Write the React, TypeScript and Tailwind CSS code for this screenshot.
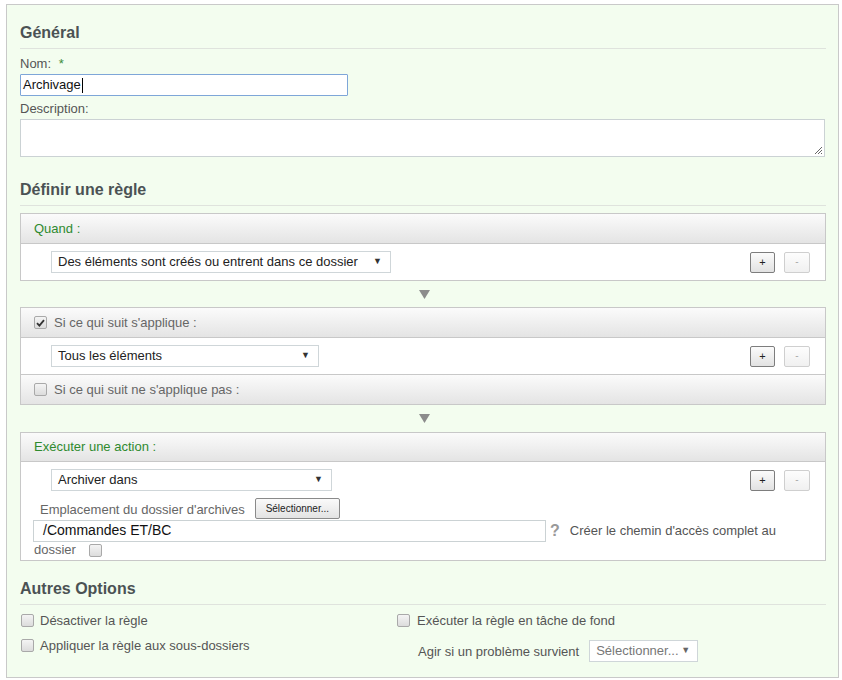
import React from 'react';

const font = { fontFamily: '"Liberation Sans", Arial, sans-serif' };

function Box({ checked = false }: { checked?: boolean }) {
  return (
    <span className="inline-flex h-[13px] w-[13px] shrink-0 items-center justify-center rounded-[2px] border border-[#a9a9a9] bg-gradient-to-b from-[#f4f4f4] to-[#dcdcdc]">
      {checked && (
        <svg width="9" height="8" viewBox="0 0 9 8">
          <path d="M1 4.2 L3.4 6.6 L8 1.2" fill="none" stroke="#333" strokeWidth="1.8" />
        </svg>
      )}
    </span>
  );
}

function Select({ label, w }: { label: string; w: string }) {
  return (
    <div className={`flex h-[22px] items-center justify-between border border-[#cfd6d9] bg-white pl-[6px] pr-[8px] text-[13px] text-[#222] ${w}`}>
      <span>{label}</span>
      <span className="text-[9px] text-[#333]">▼</span>
    </div>
  );
}

function PlusMinus() {
  return (
    <div className="flex gap-[9px]">
      <button className="flex h-[21px] w-[25px] items-center justify-center rounded-[2px] border border-[#7d7d7d] bg-gradient-to-b from-[#fbfbfb] to-[#e2e2e2] text-[11px] leading-none text-[#222]">+</button>
      <button className="flex h-[21px] w-[26px] items-center justify-center rounded-[2px] border border-[#cfcfcf] bg-gradient-to-b from-[#fdfdfd] to-[#f0f0f0] text-[10px] leading-none text-[#aaa]">-</button>
    </div>
  );
}

function Header({ children }: { children: React.ReactNode }) {
  return (
    <div className="flex h-[29px] items-center gap-[7px] bg-gradient-to-b from-[#fbfbfb] to-[#e4e4e4] pl-[13px] text-[13px] text-[#666]">
      {children}
    </div>
  );
}

function Arrow({ h }: { h: string }) {
  return (
    <div className={`flex ${h} items-center justify-center pl-[2px]`}>
      <svg width="11" height="9" viewBox="0 0 11 9">
        <path d="M0 0 H11 L5.5 9 Z" fill="#8c8c8c" />
      </svg>
    </div>
  );
}

function Heading({ children, mt }: { children: React.ReactNode; mt: string }) {
  return (
    <h2 className={`${mt} border-b border-[#dfe3dd] pb-[5px] text-[16px] font-bold leading-[20px] text-[#4b5254]`}>{children}</h2>
  );
}

export default function App() {
  return (
    <div className="min-h-[680px] bg-white pl-[6px] pt-[4px]" style={font}>
      <div className="h-[674px] w-[833px] border border-[#c9c9c9] bg-[#f3fdef] pl-[13px] pr-[12px]">
        <Heading mt="mt-[18px]">Général</Heading>
        <div className="mt-[7px] text-[13px] leading-[16px] text-[#555]">
          Nom: <span className="ml-[4px] text-[#3c8c3c]">*</span>
        </div>
        <div className="mt-[2px] flex h-[22px] w-[328px] items-center rounded-[1px] border border-[#7ea6d8] bg-white pl-[2px] text-[13px] text-[#111]">
          Archivage<span className="ml-px h-[15px] w-px bg-black" />
        </div>
        <div className="mt-[5px] text-[13px] leading-[16px] text-[#555]">Description:</div>
        <div className="relative mt-[2px] h-[38px] w-[805px] border border-[#cbd2d4] bg-white">
          <svg className="absolute bottom-[1px] right-[1px]" width="9" height="9" viewBox="0 0 9 9">
            <path d="M8 1 L1 8 M8 4 L4 8 M8 7 L7 8" stroke="#666" strokeWidth="1" />
          </svg>
        </div>

        <Heading mt="mt-[23px]">Définir une règle</Heading>

        <div className="mt-[7px] border border-[#c8c8c8]">
          <Header><span className="text-[#2f8a2f]">Quand :</span></Header>
          <div className="flex items-center justify-between border-t border-[#c8c8c8] bg-white pb-[7px] pl-[30px] pr-[15px] pt-[7px]">
            <Select label="Des éléments sont créés ou entrent dans ce dossier" w="w-[340px]" />
            <PlusMinus />
          </div>
        </div>

        <Arrow h="h-[26px]" />

        <div className="border border-[#c8c8c8]">
          <Header><Box checked /><span>Si ce qui suit s'applique :</span></Header>
          <div className="flex items-center justify-between border-y border-[#c8c8c8] bg-white pb-[7px] pl-[30px] pr-[15px] pt-[7px]">
            <Select label="Tous les éléments" w="w-[268px]" />
            <PlusMinus />
          </div>
          <Header><Box /><span>Si ce qui suit ne s'applique pas :</span></Header>
        </div>

        <Arrow h="h-[27px]" />

        <div className="border border-[#c8c8c8]">
          <div className="flex h-[28px] items-center bg-gradient-to-b from-[#fbfbfb] to-[#e4e4e4] pl-[13px] text-[13px] text-[#2f8a2f]">
            Exécuter une action :
          </div>
          <div className="border-t border-[#c8c8c8] bg-white pb-[1px] pl-[12px] pr-[15px] pt-[7px]">
            <div className="flex items-center justify-between pl-[18px]">
              <Select label="Archiver dans" w="w-[281px]" />
              <PlusMinus />
            </div>
            <div className="mt-[6px] flex items-center pl-[7px] text-[13px] text-[#666]">
              <span className="mt-[3px]">Emplacement du dossier d'archives</span>
              <button className="ml-[10px] h-[21px] w-[85px] rounded-[2px] border border-[#8a8a8a] bg-gradient-to-b from-[#fafafa] to-[#e3e3e3] text-[10px] text-[#222]">Sélectionner...</button>
            </div>
            <div className="flex items-center">
              <div className="flex h-[22px] w-[513px] items-center border border-[#cbd2d4] bg-white pl-[9px] text-[14px] text-[#111]">/Commandes ET/BC</div>
              <span className="ml-[4px] text-[16px] font-bold leading-none text-[#999]">?</span>
              <span className="ml-[10px] text-[13px] text-[#555]">Créer le chemin d'accès complet au</span>
            </div>
            <div className="flex h-[17px] items-center gap-[13px] pl-[1px] text-[13px] text-[#666]">
              <span>dossier</span>
              <Box />
            </div>
          </div>
        </div>

        <Heading mt="mt-[18px]">Autres Options</Heading>
        <div className="mt-[8px] flex text-[13px] text-[#555]">
          <div className="w-[377px] pl-[1px]">
            <div className="flex h-[16px] items-center gap-[6px]"><Box /><span>Désactiver la règle</span></div>
            <div className="mt-[9px] flex h-[16px] items-center gap-[6px]"><Box /><span>Appliquer la règle aux sous-dossiers</span></div>
          </div>
          <div>
            <div className="flex h-[16px] items-center gap-[7px]"><Box /><span>Exécuter la règle en tâche de fond</span></div>
            <div className="mt-[11px] flex items-center pl-[21px]">
              <span className="mt-[2px]">Agir si un problème survient</span>
              <div className="ml-[10px] flex h-[22px] w-[109px] items-center justify-between border border-[#cfd6d9] bg-white pl-[6px] pr-[7px] text-[13px] text-[#777]">
                <span>Sélectionner...</span>
                <span className="text-[9px] text-[#666]">▼</span>
              </div>
            </div>
          </div>
        </div>
      </div>
    </div>
  );
}
